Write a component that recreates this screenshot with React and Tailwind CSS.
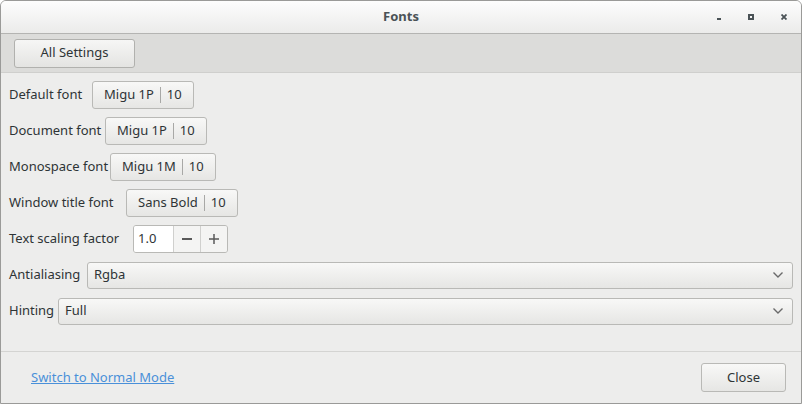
import React from 'react';

const FontButton = ({ name, size }) => (
  <button className="h-[28px] flex items-center rounded-[3px] border border-[#b9b9b6] bg-gradient-to-b from-[#f8f8f7] to-[#e6e6e4] px-[11px] text-[#2e3436]">
    <span>{name}</span>
    <span className="mx-[6px] h-[16px] w-px bg-[#a8a8a6]" />
    <span>{size}</span>
  </button>
);

const Chevron = () => (
  <svg width="12" height="8" viewBox="0 0 12 8" className="text-[#6a6a6a]">
    <path d="M1.5 1.5 L6 6 L10.5 1.5" fill="none" stroke="currentColor" strokeWidth="1.4" />
  </svg>
);

const Combo = ({ label, value, labelWidth }) => (
  <div className="flex items-center h-[28px]">
    <span className={`shrink-0 ${labelWidth}`}>{label}</span>
    <div className="flex-1 h-[27px] flex items-center justify-between rounded-[3px] border border-[#b9b9b6] bg-gradient-to-b from-[#f8f8f7] to-[#e6e6e4] pl-[6px] pr-[8px]">
      <span>{value}</span>
      <Chevron />
    </div>
  </div>
);

const App = () => {
  const fonts = [
    { label: 'Default font', name: 'Migu 1P', size: '10', w: 'w-[83px]' },
    { label: 'Document font', name: 'Migu 1P', size: '10', w: 'w-[96px]' },
    { label: 'Monospace font', name: 'Migu 1M', size: '10', w: 'w-[101px]' },
    { label: 'Window title font', name: 'Sans Bold', size: '10', w: 'w-[117px]' },
  ];

  return (
    <div className="w-[802px] h-[404px] flex flex-col overflow-hidden rounded-t-[6px] border border-[#9a9a98] bg-[#ededec] text-[13px] text-[#2e3436] font-['Noto_Sans',sans-serif]">
      {/* title bar */}
      <div className="relative h-[33px] shrink-0 flex items-center justify-center border-b border-[#b4b4b2] bg-gradient-to-b from-[#fdfdfd] to-[#ebebea]">
        <span className="font-bold text-[#4a5256]">Fonts</span>
        <div className="absolute right-[14px] top-[13px] flex items-end gap-[27px]">
          <span className="h-[2px] w-[4px] bg-[#4a5256]" />
          <span className="h-[6px] w-[6px] border-[2px] border-[#4a5256]" />
          <svg width="6" height="6" viewBox="0 0 6 6">
            <path d="M0.5 0.5 L5.5 5.5 M5.5 0.5 L0.5 5.5" stroke="#4a5256" strokeWidth="1.8" />
          </svg>
        </div>
      </div>

      {/* toolbar */}
      <div className="h-[39px] shrink-0 flex items-center pl-[13px] border-b border-[#cfcfcd] bg-[#dcdcda]">
        <button className="h-[29px] w-[121px] rounded-[3px] border border-[#b1b1ae] bg-gradient-to-b from-[#f6f6f5] to-[#e4e4e2] text-[#2e3436]">
          All Settings
        </button>
      </div>

      {/* settings */}
      <div className="flex flex-col gap-[8px] pt-[8px] pl-[8px] pr-[8px]">
        {fonts.map((f) => (
          <div key={f.label} className="flex items-center h-[28px]">
            <span className={`shrink-0 whitespace-nowrap ${f.w}`}>{f.label}</span>
            <FontButton name={f.name} size={f.size} />
          </div>
        ))}
        <div className="flex items-center h-[28px]">
          <span className="shrink-0 w-[124px]">Text scaling factor</span>
          <div className="h-[28px] flex rounded-[3px] border border-[#b9b9b6] overflow-hidden">
            <div className="w-[39px] bg-white flex items-center pl-[4px]">1.0</div>
            <div className="w-[27px] flex items-center justify-center border-l border-[#d0d0ce] bg-[#f4f4f3]">
              <span className="h-[1.5px] w-[10px] bg-[#5a5a5a]" />
            </div>
            <div className="w-[27px] flex items-center justify-center border-l border-[#d0d0ce] bg-[#f4f4f3]">
              <svg width="10" height="10" viewBox="0 0 10 10">
                <path d="M5 0 V10 M0 5 H10" stroke="#5a5a5a" strokeWidth="1.5" />
              </svg>
            </div>
          </div>
        </div>
        <Combo label="Antialiasing" value="Rgba" labelWidth="w-[78px]" />
        <Combo label="Hinting" value="Full" labelWidth="w-[49px]" />
      </div>

      <div className="flex-1" />

      {/* footer */}
      <div className="h-[52px] shrink-0 flex items-center justify-between border-t border-[#d4d4d2] pl-[30px] pr-[15px]">
        <a href="#" className="text-[#4a90d9] underline">Switch to Normal Mode</a>
        <button className="h-[29px] w-[85px] rounded-[3px] border border-[#b9b9b6] bg-gradient-to-b from-[#f8f8f7] to-[#e6e6e4] text-[#2e3436]">
          Close
        </button>
      </div>
    </div>
  );
};

export default App;
